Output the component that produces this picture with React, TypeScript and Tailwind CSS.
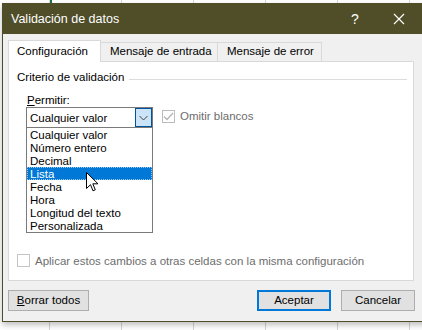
import React from "react";

const items = [
  "Cualquier valor",
  "Número entero",
  "Decimal",
  "Lista",
  "Fecha",
  "Hora",
  "Longitud del texto",
  "Personalizada",
];

export default function App() {
  return (
    <div className="relative w-[422px] h-[330px] overflow-hidden bg-white font-['Liberation_Sans',Arial,sans-serif] text-[11.5px] text-black">
      {/* Excel grid behind */}
      <div className="absolute inset-0 flex">
        <div className="w-[50px] h-full border-r border-[#d4d4d4] shrink-0" />
        <div className="w-[72px] h-full border-r border-[#d4d4d4] shrink-0" />
        <div className="w-[72px] h-full border-r border-[#d4d4d4] shrink-0" />
        <div className="w-[72px] h-full border-r border-[#d4d4d4] shrink-0" />
        <div className="w-[72px] h-full border-r border-[#d4d4d4] shrink-0" />
        <div className="w-[72px] h-full border-r border-[#d4d4d4] shrink-0" />
      </div>
      <div className="absolute left-[50px] top-0 w-[2px] h-[3px] bg-[#217346]" />

      {/* Dialog */}
      <div className="absolute left-[2px] top-[3px] w-[430px] h-[319px] bg-[#f0f0f0] border-l border-b border-[#4f4e29] shadow-[0_3px_6px_rgba(0,0,0,0.25)] flex flex-col">
        {/* Title bar */}
        <div className="h-[31px] bg-[#4f4e29] text-white flex items-center relative shrink-0">
          <span className="pl-[8px] text-[12.5px] mt-[2px]">Validación de datos</span>
          <span className="absolute left-[348px] top-[9px] text-[14px] leading-[14px]">?</span>
          <svg className="absolute left-[390px] top-[10px]" width="12" height="12" viewBox="0 0 12 12">
            <path d="M1 1 L11 11 M11 1 L1 11" stroke="white" strokeWidth="1.2" />
          </svg>
        </div>

        <div className="pl-[5px] pt-[7px] flex flex-col">
          {/* Tabs */}
          <div className="flex items-end h-[21px] relative z-10 -mb-px">
            <div className="w-[93px] h-[22px] bg-white border-t border-l border-r border-[#d9d9d9] pl-[8px] flex items-center">
              Configuración
            </div>
            <div className="w-[118px] h-[19px] -ml-px border-t border-l border-r border-[#d9d9d9] pl-[9px] flex items-center mb-px">
              Mensaje de entrada
            </div>
            <div className="w-[105px] h-[19px] -ml-px border-t border-l border-r border-[#d9d9d9] pl-[9px] flex items-center mb-px">
              Mensaje de error
            </div>
          </div>

          {/* Panel */}
          <div className="relative w-[406px] h-[220px] bg-white border border-[#d9d9d9] flex flex-col">
            <div className="mt-[9px] flex items-center h-[14px] pl-[8px] pr-[6px]">
              <span>Criterio de validación</span>
              <div className="flex-1 ml-[5px] h-px bg-[#dcdcdc] mt-[2px]" />
            </div>
            <div className="mt-[8px] pl-[18px] h-[14px] leading-[14px]">
              <span className="underline">P</span>ermitir:
            </div>
            <div className="mt-0 pl-[17px] flex items-start">
              <div className="w-[127px] h-[21px] border border-[#7a7a7a] flex items-center bg-white">
                <span className="pl-[3px] flex-1 mt-[2px]">Cualquier valor</span>
                <div className="w-[17px] h-[19px] bg-[#cce4f7] border border-[#005499] flex items-center justify-center">
                  <svg width="9" height="6" viewBox="0 0 9 6">
                    <path d="M0.5 1 L4.5 5 L8.5 1" stroke="#444" strokeWidth="1" fill="none" />
                  </svg>
                </div>
              </div>
              <div className="ml-[9px] mt-px flex items-center">
                <div className="w-[13px] h-[13px] border border-[#bcbcbc] flex items-center justify-center">
                  <svg width="11" height="9" viewBox="0 0 11 9">
                    <path d="M1 4.5 L4 7.5 L10 1" stroke="#b4b4b4" strokeWidth="1.3" fill="none" />
                  </svg>
                </div>
                <span className="ml-[5px] text-[#6d6d6d]">Omitir blancos</span>
              </div>
            </div>

            <div className="mt-auto mb-[10px] pl-[8px] flex items-center">
              <div className="w-[13px] h-[13px] border border-[#c4c4c4] bg-white" />
              <span className="ml-[5px] text-[#6d6d6d] mt-[1px]">
                Aplicar estos cambios a otras celdas con la misma configuración
              </span>
            </div>

            {/* Dropdown list */}
            <div className="absolute left-[17px] top-[65px] w-[127px] border border-[#7a7a7a] bg-white py-0 z-20">
              {items.map((it) => (
                <div
                  key={it}
                  className={
                    it === "Lista"
                      ? "h-[13px] leading-[14px] pl-[3px] bg-[#0078d7] text-white outline-1 outline-dotted outline-[#9cc7f0] -outline-offset-1"
                      : "h-[13px] leading-[14px] pl-[3px]"
                  }
                >
                  {it}
                </div>
              ))}
            </div>

            {/* Cursor */}
            <svg className="absolute left-[77px] top-[110px] z-30" width="13" height="21" viewBox="0 0 13 21">
              <path
                d="M0.5 0.5 L0.5 16.5 L4.5 12.7 L7 18.8 L9.3 17.8 L6.8 11.8 L12 11.8 Z"
                fill="white"
                stroke="black"
                strokeWidth="1"
                strokeLinejoin="miter"
              />
            </svg>
          </div>

          {/* Buttons */}
          <div className="mt-[9px] flex items-center">
            <div className="w-[81px] h-[21px] bg-[#e1e1e1] border border-[#adadad] flex items-center justify-center">
              <span className="mt-[1px]">
                <span className="underline">B</span>orrar todos
              </span>
            </div>
            <div className="ml-[168px] w-[74px] h-[21px] bg-[#e1e1e1] border-2 border-[#0078d7] flex items-center justify-center">
              <span className="mt-[1px]">Aceptar</span>
            </div>
            <div className="ml-[10px] w-[74px] h-[21px] bg-[#e1e1e1] border border-[#adadad] flex items-center justify-center">
              <span className="mt-[1px]">Cancelar</span>
            </div>
          </div>
        </div>
      </div>
    </div>
  );
}
